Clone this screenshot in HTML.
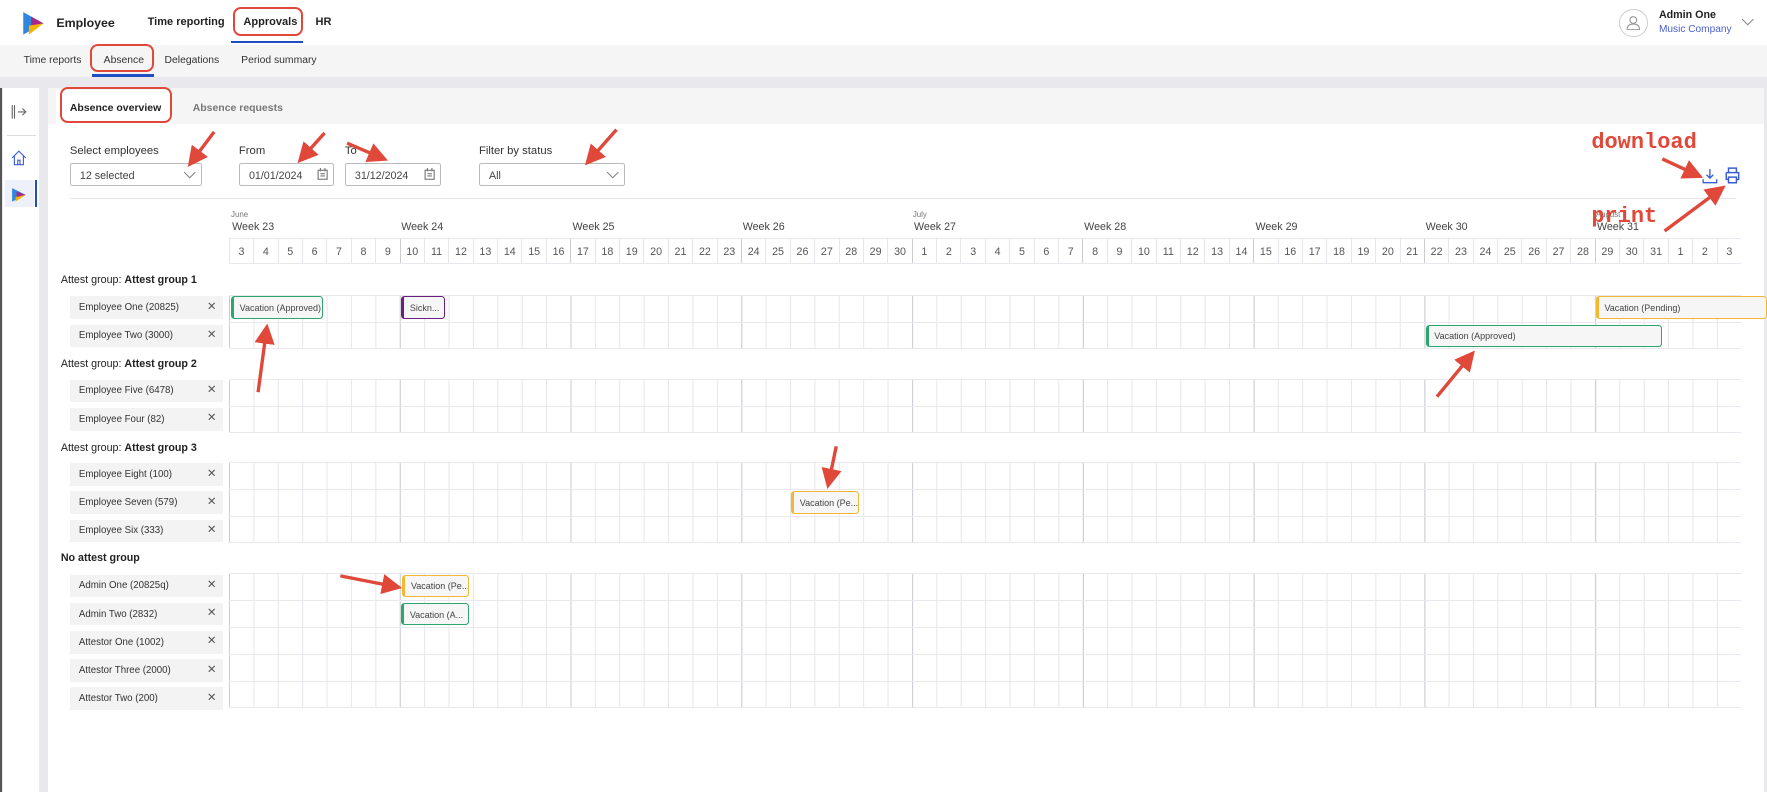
<!DOCTYPE html>
<html><head><meta charset="utf-8"><style>
*{box-sizing:border-box;margin:0;padding:0}
html,body{width:1767px;height:792px;overflow:hidden;background:#e9e9ed}
body{font-family:"Liberation Sans",sans-serif;color:#333}
#z{zoom:1.127;position:relative;width:1568px;height:703px;background:#e9e9ed}
.a{position:absolute;white-space:nowrap}
.top{position:absolute;left:0;top:0;width:1568px;height:40px;background:#fff}
.sub{position:absolute;left:0;top:40px;width:1568px;height:28px;background:#f5f5f6}
.redbox{position:absolute;border:2.5px solid #e0483a;border-radius:7px}
.side{position:absolute;left:3px;top:78px;width:32px;height:630px;background:#fff}
.main{position:absolute;left:43px;top:78px;width:1522px;height:630px;background:#fff}
.inp{position:absolute;height:20px;border:1px solid #bbb;border-radius:2px;font-size:9.5px;padding:5px 8px;color:#444;background:#fff}
.lbl{position:absolute;font-size:10px;color:#333}
.grid{position:absolute;left:203px;width:1342px;height:24px;border-top:1px solid #e8e8ee;
background-image:linear-gradient(90deg,#ccccd4 0 1px,transparent 1px),linear-gradient(90deg,#e6e6ec 0 1px,transparent 1px);
background-size:151.55px 24px,21.645px 24px}
.chip{position:absolute;left:62px;width:136px;height:20px;background:#f3f3f4;font-size:8.6px;padding:5px 8px;color:#333}
.chip:after{content:"✕";position:absolute;right:6px;top:3px;font-size:10px;color:#555}
.gh{position:absolute;left:54px;font-size:9.5px;color:#222}
.bar{position:absolute;height:20px;border:1.3px solid;border-left-width:3px;border-radius:3px;background:#f6f6f6;font-size:8px;padding:5px 5px;color:#444;overflow:hidden;white-space:nowrap}
.g{border-color:#2ca56e}.p{border-color:#6a2080}.o{border-color:#f4b731}
.days{position:absolute;left:203px;top:211px;width:1342px;height:23px;display:flex;border-top:1px solid #e8e8ee;border-bottom:1px solid #e8e8ee}
.days span{width:21.645px;text-align:center;font-size:9.5px;color:#555;padding-top:6px;border-left:1px solid #e6e6ec}
.days span.w{border-left:1px solid #ccccd4}
.wk{position:absolute;top:196px;font-size:9.5px;color:#444}
.mo{position:absolute;top:186px;font-size:7px;color:#777}
.ann{position:absolute;font-family:"Liberation Mono",monospace;font-weight:bold;color:#e0483a;font-size:19.5px}
.nav{position:absolute;top:14px;font-size:9.8px;font-weight:bold;color:#222}
.sn{position:absolute;top:49px;font-size:9.2px;color:#333}
</style></head><body><div id="z">
<div class="top"></div>
<svg class="a" style="left:19px;top:10px" width="22" height="22" viewBox="0 0 22 22"><polygon points="2,1 20,11 2,21" fill="#2f86de"/><polygon points="9,5 20,11 9,17" fill="#a42a8a"/><polygon points="7,13 20,11 7,21" fill="#f5b400"/></svg>
<div class="a" style="left:50px;top:14px;font-size:11px;font-weight:bold;color:#222">Employee</div>
<div class="nav" style="left:131px">Time reporting</div>
<div class="nav" style="left:216px">Approvals</div>
<div class="nav" style="left:280px">HR</div>
<div class="redbox" style="left:207px;top:6px;width:62px;height:26px"></div>
<div class="a" style="left:205px;top:36px;width:64px;height:2px;background:#1e4fc2"></div>
<div class="a" style="left:1437px;top:8px;width:25px;height:25px;border:1px solid #ccc;border-radius:50%"></div>
<svg class="a" style="left:1443px;top:13px" width="13" height="14" viewBox="0 0 13 14"><circle cx="6.5" cy="4.5" r="3" fill="none" stroke="#999"/><path d="M1 13 Q1 8 6.5 8 Q12 8 12 13 Z" fill="none" stroke="#999"/></svg>
<div class="a" style="left:1472px;top:8px;font-size:9.5px;font-weight:bold;color:#222">Admin One</div>
<div class="a" style="left:1472px;top:21px;font-size:9px;color:#4a5fd0">Music Company</div>
<svg class="a" style="left:1545px;top:16px" width="12" height="8"><path d="M1 1 L6 6 L11 1" fill="none" stroke="#888"/></svg>
<div class="sub"></div>
<div class="sn" style="left:21px">Time reports</div>
<div class="sn" style="left:92px">Absence</div>
<div class="sn" style="left:146px">Delegations</div>
<div class="sn" style="left:214px">Period summary</div>
<div class="redbox" style="left:80px;top:39px;width:57px;height:25px"></div>
<div class="a" style="left:82px;top:66px;width:55px;height:2px;background:#1e4fc2"></div>
<div class="side"></div>
<div class="a" style="left:0;top:78px;width:2px;height:630px;background:#555"></div>
<svg class="a" style="left:9px;top:92px" width="16" height="14"><path d="M2 1 V13 M4 1 V13" stroke="#666" fill="none"/><path d="M7 7 H14 M11 4 L14 7 L11 10" stroke="#666" fill="none"/></svg>
<div class="a" style="left:6px;top:120px;width:26px;height:1px;background:#ddd"></div>
<svg class="a" style="left:10px;top:133px" width="14" height="14"><path d="M1 7 L7 1 L13 7 M3 5 V13 H11 V5 M6 13 V9 H8 V13" stroke="#3a5ed0" fill="none"/></svg>
<div class="a" style="left:4px;top:160px;width:26px;height:24px;background:#eef0fb"></div>
<svg class="a" style="left:10px;top:166px" width="14" height="14"><polygon points="1,1 13,7 1,13" fill="#2f86de"/><polygon points="5,4 13,7 5,10" fill="#a42a8a"/><polygon points="4,9 13,7 4,13" fill="#f5b400"/></svg>
<div class="a" style="left:31px;top:160px;width:2px;height:24px;background:#1e4fc2"></div>
<div class="main"></div>
<div class="a" style="left:43px;top:78px;width:1522px;height:32px;background:#f5f5f6"></div>
<div class="a" style="left:50px;top:80px;width:103px;height:30px;background:#fff"></div>
<div class="a" style="left:62px;top:91px;font-size:9.3px;font-weight:bold;color:#222">Absence overview</div>
<div class="a" style="left:171px;top:91px;font-size:9.3px;font-weight:bold;color:#777">Absence requests</div>
<div class="redbox" style="left:53px;top:77px;width:100px;height:32px"></div>
<div class="lbl" style="left:62px;top:129px">Select employees</div>
<div class="inp" style="left:62px;top:145px;width:117px">12 selected</div>
<svg class="a" style="left:162px;top:152px" width="12" height="7"><path d="M1 1 L6 6 L11 1" fill="none" stroke="#888"/></svg>
<div class="lbl" style="left:212px;top:129px">From</div>
<div class="inp" style="left:212px;top:145px;width:84px">01/01/2024</div>
<div class="lbl" style="left:306px;top:129px">To</div>
<div class="inp" style="left:306px;top:145px;width:85px">31/12/2024</div>
<svg class="a" style="left:281px;top:149px" width="10" height="11"><rect x="1" y="2" width="8" height="8" fill="none" stroke="#777"/><path d="M3 0 V3 M7 0 V3 M3 5 H7 M3 7 H7" stroke="#777"/></svg>
<svg class="a" style="left:376px;top:149px" width="10" height="11"><rect x="1" y="2" width="8" height="8" fill="none" stroke="#777"/><path d="M3 0 V3 M7 0 V3 M3 5 H7 M3 7 H7" stroke="#777"/></svg>
<div class="lbl" style="left:425px;top:129px">Filter by status</div>
<div class="inp" style="left:425px;top:145px;width:130px">All</div>
<svg class="a" style="left:538px;top:152px" width="12" height="7"><path d="M1 1 L6 6 L11 1" fill="none" stroke="#888"/></svg>
<svg class="a" style="left:1510px;top:149px" width="14" height="14"><path d="M7 1 V9 M4 6 L7 9 L10 6 M1 10 V13 H13 V10" fill="none" stroke="#3a5ed0" stroke-width="1.2"/></svg>
<svg class="a" style="left:1530px;top:148px" width="15" height="15"><path d="M4 5 V1 H11 V5 M2 5 H13 V11 H11 M4 11 H2 V5 M4 9 H11 V14 H4 Z" fill="none" stroke="#3a5ed0" stroke-width="1.3"/></svg>
<div class="a" style="left:62px;top:176px;width:1478px;height:1px;background:#e6e6ea"></div>
<div class="mo" style="left:205px">June</div><div class="mo" style="left:810px">July</div><div class="mo" style="left:1416px">August</div>
<div class="wk" style="left:206px">Week 23</div><div class="wk" style="left:356px">Week 24</div><div class="wk" style="left:508px">Week 25</div><div class="wk" style="left:659px">Week 26</div><div class="wk" style="left:811px">Week 27</div><div class="wk" style="left:962px">Week 28</div><div class="wk" style="left:1114px">Week 29</div><div class="wk" style="left:1265px">Week 30</div><div class="wk" style="left:1417px">Week 31</div>
<div class="days"><span>3</span><span>4</span><span>5</span><span>6</span><span>7</span><span>8</span><span>9</span><span class="w">10</span><span>11</span><span>12</span><span>13</span><span>14</span><span>15</span><span>16</span><span class="w">17</span><span>18</span><span>19</span><span>20</span><span>21</span><span>22</span><span>23</span><span class="w">24</span><span>25</span><span>26</span><span>27</span><span>28</span><span>29</span><span>30</span><span class="w">1</span><span>2</span><span>3</span><span>4</span><span>5</span><span>6</span><span>7</span><span class="w">8</span><span>9</span><span>10</span><span>11</span><span>12</span><span>13</span><span>14</span><span class="w">15</span><span>16</span><span>17</span><span>18</span><span>19</span><span>20</span><span>21</span><span class="w">22</span><span>23</span><span>24</span><span>25</span><span>26</span><span>27</span><span>28</span><span class="w">29</span><span>30</span><span>31</span><span>1</span><span>2</span><span>3</span></div>
<div class="gh" style="top:243px">Attest group: <b>Attest group 1</b></div>
<div class="grid" style="top:262px"></div><div class="grid" style="top:286px;border-bottom:1px solid #e8e8ee"></div>
<div class="chip" style="top:263px">Employee One (20825)</div><div class="chip" style="top:288px">Employee Two (3000)</div>
<div class="gh" style="top:318px">Attest group: <b>Attest group 2</b></div>
<div class="grid" style="top:336px"></div><div class="grid" style="top:360px;border-bottom:1px solid #e8e8ee"></div>
<div class="chip" style="top:337px">Employee Five (6478)</div><div class="chip" style="top:362px">Employee Four (82)</div>
<div class="gh" style="top:392px">Attest group: <b>Attest group 3</b></div>
<div class="grid" style="top:410px"></div><div class="grid" style="top:434px"></div><div class="grid" style="top:458px;border-bottom:1px solid #e8e8ee"></div>
<div class="chip" style="top:411px">Employee Eight (100)</div><div class="chip" style="top:436px">Employee Seven (579)</div><div class="chip" style="top:461px">Employee Six (333)</div>
<div class="gh" style="top:490px;font-weight:bold">No attest group</div>
<div class="grid" style="top:508px"></div><div class="grid" style="top:532px"></div><div class="grid" style="top:556px"></div><div class="grid" style="top:580px"></div><div class="grid" style="top:604px;border-bottom:1px solid #e8e8ee"></div>
<div class="chip" style="top:510px">Admin One (20825q)</div><div class="chip" style="top:535px">Admin Two (2832)</div><div class="chip" style="top:560px">Attestor One (1002)</div><div class="chip" style="top:585px">Attestor Three (2000)</div><div class="chip" style="top:610px">Attestor Two (200)</div>
<div class="bar g" style="left:205px;top:263px;width:82px">Vacation (Approved)</div>
<div class="bar p" style="left:356px;top:263px;width:39px">Sickn...</div>
<div class="bar o" style="left:1416px;top:263px;width:152px">Vacation (Pending)</div>
<div class="bar g" style="left:1265px;top:288px;width:210px">Vacation (Approved)</div>
<div class="bar o" style="left:702px;top:436px;width:60px">Vacation (Pe...</div>
<div class="bar o" style="left:357px;top:510px;width:59px">Vacation (Pe...</div>
<div class="bar g" style="left:356px;top:535px;width:60px">Vacation (A...</div>
<div class="ann" style="left:1412px;top:115px">download</div>
<div class="ann" style="left:1412px;top:181px">print</div>
<svg class="a" style="left:0;top:0" width="1568" height="703">
<defs><marker id="m" markerWidth="6" markerHeight="6" refX="3" refY="3" orient="auto"><path d="M0 0 L6 3 L0 6 Z" fill="#e0483a"/></marker></defs>
<g stroke="#e0483a" stroke-width="3" marker-end="url(#m)" fill="none">
<line x1="190" y1="117" x2="172" y2="141"/>
<line x1="288" y1="118" x2="270" y2="138"/>
<line x1="308" y1="127" x2="336" y2="139"/>
<line x1="547" y1="115" x2="525" y2="140"/>
<line x1="1475" y1="141" x2="1503" y2="154"/>
<line x1="1477" y1="205" x2="1524" y2="170"/>
<line x1="229" y1="348" x2="236" y2="296"/>
<line x1="1275" y1="352" x2="1303" y2="318"/>
<line x1="742" y1="396" x2="736" y2="425"/>
<line x1="302" y1="511" x2="348" y2="520"/>
</g></svg>
</div></body></html>
